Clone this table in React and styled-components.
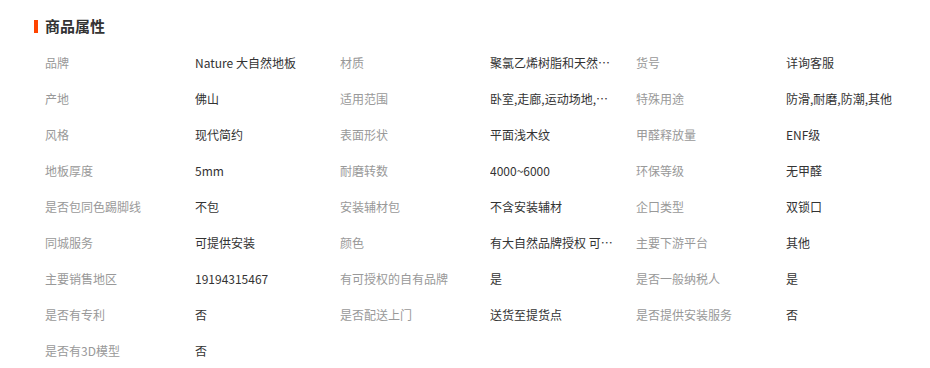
import React from "react";
import styled, { createGlobalStyle } from "styled-components";

const GlobalStyle = createGlobalStyle`
  html, body {
    margin: 0;
    padding: 0;
    background: #fff;
  }
  body {
    font-family: "Noto Sans CJK SC", "Noto Sans", sans-serif;
    font-size: 12px;
    color: #333;
  }
`;

const Section = styled.section`
  width: 930px;
  padding: 16px 0 0 34px;
  box-sizing: border-box;
`;

const Title = styled.h3`
  display: flex;
  align-items: center;
  margin: 0 0 8px;
  height: 20px;
  line-height: 20px;
  font-size: 15px;
  font-weight: bold;
  color: #333;

  &::before {
    content: "";
    width: 4px;
    height: 13px;
    margin-right: 7px;
    background: #ff4400;
  }
`;

const Grid = styled.ul`
  list-style: none;
  margin: 0;
  padding: 0 0 0 11px;
  display: grid;
  grid-template-columns: 295px 296px 1fr;
  grid-auto-rows: 36px;
`;

const Item = styled.li`
  display: flex;
  align-items: center;
  min-width: 0;
`;

const Label = styled.span`
  flex: 0 0 150px;
  color: #999;
  white-space: nowrap;
`;

const Value = styled.span`
  max-width: 125px;
  color: #333;
  white-space: nowrap;
  overflow: hidden;
  text-overflow: ellipsis;
`;

const attrs = [
  ["品牌", "Nature 大自然地板"],
  ["材质", "聚氯乙烯树脂和天然石粉"],
  ["货号", "详询客服"],
  ["产地", "佛山"],
  ["适用范围", "卧室,走廊,运动场地,其他"],
  ["特殊用途", "防滑,耐磨,防潮,其他"],
  ["风格", "现代简约"],
  ["表面形状", "平面浅木纹"],
  ["甲醛释放量", "ENF级"],
  ["地板厚度", "5mm"],
  ["耐磨转数", "4000~6000"],
  ["环保等级", "无甲醛"],
  ["是否包同色踢脚线", "不包"],
  ["安装辅材包", "不含安装辅材"],
  ["企口类型", "双锁口"],
  ["同城服务", "可提供安装"],
  ["颜色", "有大自然品牌授权 可提供授权书"],
  ["主要下游平台", "其他"],
  ["主要销售地区", "19194315467"],
  ["有可授权的自有品牌", "是"],
  ["是否一般纳税人", "是"],
  ["是否有专利", "否"],
  ["是否配送上门", "送货至提货点"],
  ["是否提供安装服务", "否"],
  ["是否有3D模型", "否"],
];

export default function App() {
  return (
    <>
      <GlobalStyle />
      <Section>
        <Title>商品属性</Title>
        <Grid>
          {attrs.map(([label, value]) => (
            <Item key={label}>
              <Label>{label}</Label>
              <Value title={value}>{value}</Value>
            </Item>
          ))}
        </Grid>
      </Section>
    </>
  );
}
